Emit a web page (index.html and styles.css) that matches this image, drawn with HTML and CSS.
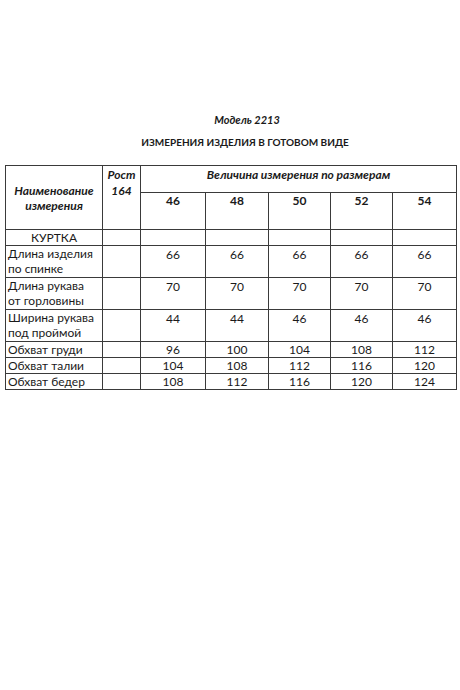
FILE: index.html
```html
<!DOCTYPE html>
<html lang="ru">
<head>
<meta charset="utf-8">
<link rel="stylesheet" href="styles.css">
</head>
<body>
<div class="page">
  <p class="model">Модель 2213</p>
  <p class="heading">ИЗМЕРЕНИЯ ИЗДЕЛИЯ В ГОТОВОМ ВИДЕ</p>
  <table class="sizes">
    <colgroup>
      <col class="c-name"><col class="c-rost"><col class="c-46"><col class="c-48"><col class="c-50"><col class="c-52"><col class="c-54">
    </colgroup>
    <tr class="h1">
      <td rowspan="2" class="hname">Наименование<br>измерения</td>
      <td rowspan="2" class="hrost">Рост<br>164</td>
      <td colspan="5" class="hval">Величина измерения по размерам</td>
    </tr>
    <tr class="h2">
      <td class="hs">46</td><td class="hs">48</td><td class="hs">50</td><td class="hs">52</td><td class="hs">54</td>
    </tr>
    <tr class="r1">
      <td class="sect">КУРТКА</td><td></td><td></td><td></td><td></td><td></td><td></td>
    </tr>
    <tr class="r2">
      <td class="name">Длина изделия<br>по спинке</td><td></td><td class="v">66</td><td class="v">66</td><td class="v">66</td><td class="v">66</td><td class="v">66</td>
    </tr>
    <tr class="r2">
      <td class="name">Длина рукава<br>от горловины</td><td></td><td class="v">70</td><td class="v">70</td><td class="v">70</td><td class="v">70</td><td class="v">70</td>
    </tr>
    <tr class="r2">
      <td class="name">Ширина рукава<br>под проймой</td><td></td><td class="v">44</td><td class="v">44</td><td class="v">46</td><td class="v">46</td><td class="v">46</td>
    </tr>
    <tr class="r1">
      <td class="name">Обхват груди</td><td></td><td class="v">96</td><td class="v">100</td><td class="v">104</td><td class="v">108</td><td class="v">112</td>
    </tr>
    <tr class="r1">
      <td class="name">Обхват талии</td><td></td><td class="v">104</td><td class="v">108</td><td class="v">112</td><td class="v">116</td><td class="v">120</td>
    </tr>
    <tr class="r1">
      <td class="name">Обхват бедер</td><td></td><td class="v">108</td><td class="v">112</td><td class="v">116</td><td class="v">120</td><td class="v">124</td>
    </tr>
  </table>
</div>
</body>
</html>
```
FILE: styles.css
```css
html, body {
  margin: 0;
  padding: 0;
  background: #ffffff;
}
body {
  font-family: Lato, "Open Sans", "Liberation Sans", sans-serif;
  color: #1a1a1a;
  width: 460px;
  height: 690px;
  overflow: hidden;
}
.page {
  padding-top: 112px;
}
.model {
  margin: 0;
  text-align: center;
  font-size: 11px;
  line-height: 16px;
  font-weight: bold;
  font-style: italic;
  padding-left: 34px;
}
.heading {
  margin: 6px 0 0 0;
  text-align: center;
  font-size: 10px;
  line-height: 16px;
  font-weight: bold;
  padding-left: 30px;
}
.sizes {
  margin: 15px 0 0 5px;
  border-collapse: collapse;
  table-layout: fixed;
  width: 451px;
  font-size: 12px;
  line-height: 15px;
}
.c-name { width: 97px; }
.c-rost { width: 38px; }
.c-46 { width: 65px; }
.c-48 { width: 63px; }
.c-50 { width: 62px; }
.c-52 { width: 62px; }
.c-54 { width: 64px; }
.sizes td {
  border: 1px solid #3a3a3a;
  padding: 0;
  vertical-align: top;
  text-align: center;
}
.h1 td { height: 26px; }
.h2 td { height: 36px; }
.r1 td { height: 15px; }
.r2 td { height: 31px; }
.hname {
  vertical-align: middle !important;
  font-weight: bold;
  font-style: italic;
  line-height: 15px;
}
.hrost {
  font-weight: bold;
  font-style: italic;
  line-height: 16px;
  padding-top: 1px !important;
}
.hval {
  font-weight: bold;
  font-style: italic;
  line-height: 18px;
}
.hs {
  font-weight: bold;
  line-height: 16px;
}
.sect {
  text-align: center;
}
.name {
  text-align: left !important;
  padding-left: 2px !important;
  line-height: 15px;
}
.r2 .v {
  line-height: 17px;
}
```
